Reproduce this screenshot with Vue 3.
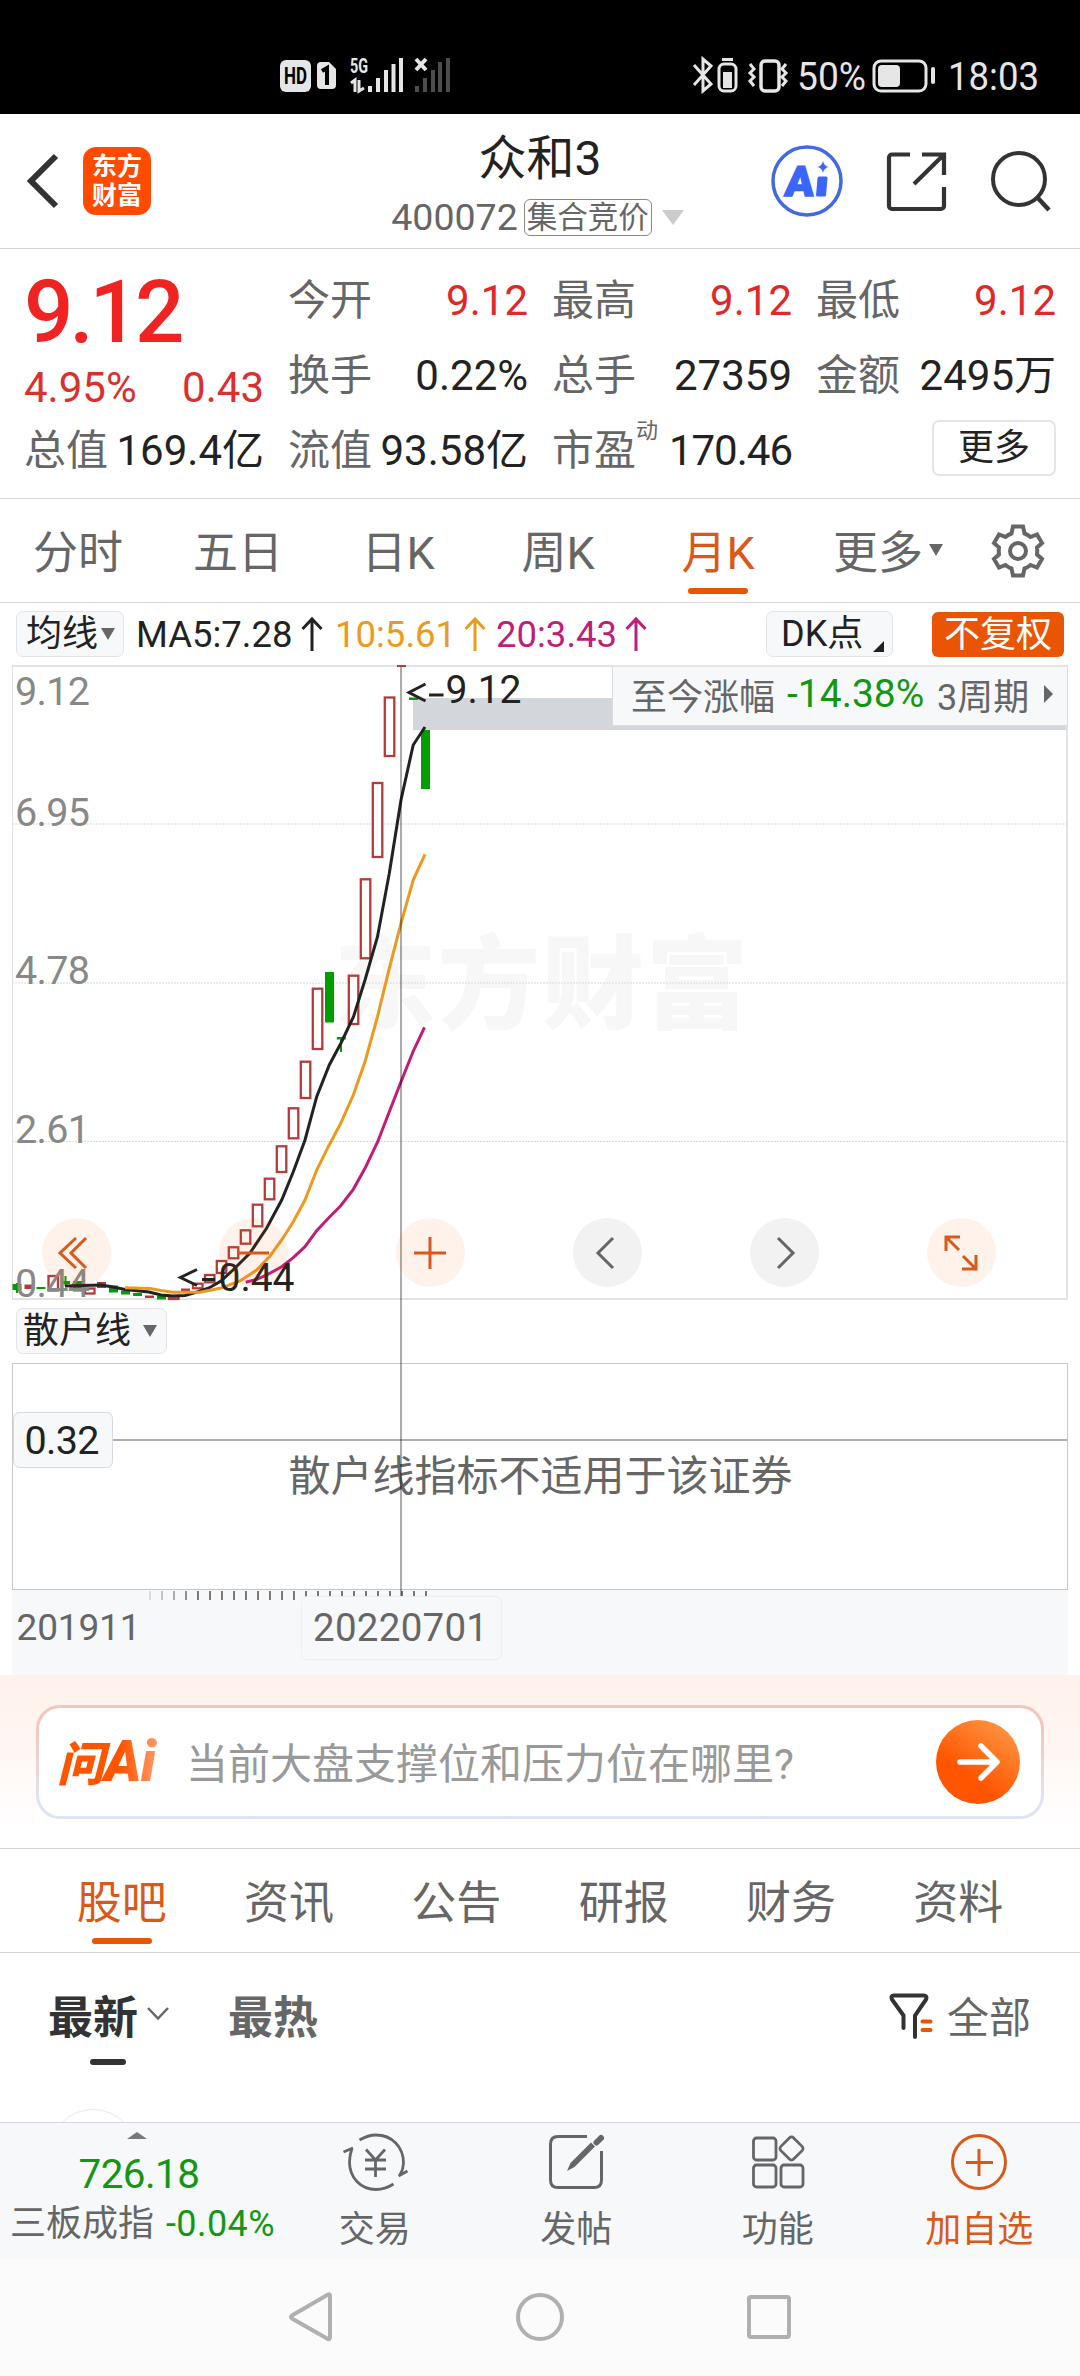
<template>
  <div class="page">
    <div class="status-bar">
      <svg class="status-icons" width="180" height="44" viewBox="276 54 180 44">
        <rect x="280" y="60" width="31" height="32" rx="6" fill="#e6e6e6" />
        <text class="st-bold" x="284" y="84" font-size="23" textLength="23" lengthAdjust="spacingAndGlyphs" fill="#000">HD</text>
        <path d="M321 62h8l7 7v16a4 4 0 0 1-4 4h-11a4 4 0 0 1-4-4V66a4 4 0 0 1 4-4z" fill="#e6e6e6" />
        <path d="M322 71l5-3v17" fill="none" stroke="#000" stroke-width="4" />
        <text class="st-bold" x="350" y="73" font-size="20" textLength="18" lengthAdjust="spacingAndGlyphs" fill="#e6e6e6">5G</text>
        <path d="M351 83l4-3v12M359 80v11l5-3" fill="none" stroke="#e6e6e6" stroke-width="3" />
        <path d="M370 86v6M378 78v14M386 70v22M393.500 64v28M401 58v34" stroke="#e6e6e6" stroke-width="4" />
        <path d="M416 59l10 11M426 59l-10 11" stroke="#e6e6e6" stroke-width="4" />
        <path d="M417 86v6M425 78v14M433 70v22M440 62v30M448 58v34" stroke="#4d4d4d" stroke-width="4" />
      </svg>
      <svg class="status-icons" width="350" height="44" viewBox="690 54 350 44">
        <g fill="none" stroke="#e6e6e6" stroke-width="3">
          <path d="M694 65l17 19-8 7V59l8 7-17 19" />
          <rect x="719" y="64" width="17" height="27" rx="5" />
          <rect x="761" y="61" width="18" height="30" rx="4" stroke-width="3.500" />
          <path d="M750 64l4 5-4 4 4 4-4 4 4 5M786 64l-4 5 4 4-4 4 4 4-4 5" />
          <rect x="874" y="61" width="52" height="30" rx="7" />
        </g>
        <path d="M722 58h11v3h-11zM723 72h9v16h-9z" fill="#e6e6e6" />
        <rect x="878" y="65" width="22" height="22" rx="4" fill="#e6e6e6" />
        <rect x="931" y="67" width="4" height="17" rx="2" fill="#e6e6e6" />
        <text x="797" y="90" font-size="38.500" textLength="69" lengthAdjust="spacingAndGlyphs" fill="#e6e6e6">50%</text>
        <text x="948" y="90" font-size="38.500" textLength="91" lengthAdjust="spacingAndGlyphs" fill="#e6e6e6">18:03</text>
      </svg>
    </div>

    <header class="header">
      <div class="header-left">
        <svg width="36" height="60" viewBox="0 0 36 60">
          <path d="M31 5L6 30L31 55" fill="none" stroke="#333" stroke-width="6" />
        </svg>
        <div class="brand"><span>东方</span><span>财富</span></div>
      </div>
      <div class="header-title">
        <div class="name">众和3</div>
        <div class="code">
          <span>400072</span>
          <span class="tag">集合竞价</span>
          <i class="drop"></i>
        </div>
      </div>
      <div class="header-right">
        <svg width="74" height="74" viewBox="771 145 74 74">
          <circle cx="808" cy="182" r="34" fill="#fff" stroke="#4169e1" stroke-width="3.500" />
          <g transform="translate(785 196.500) skewX(-5)">
            <text class="heavy" x="0" y="0" font-size="42" textLength="29" lengthAdjust="spacingAndGlyphs" fill="#3b66fa" stroke="#3b66fa" stroke-width="1.500">A</text>
            <rect x="32" y="-19" width="10" height="20" rx="1.500" fill="#3b66fa" />
          </g>
          <path d="M824 162q1 5 5.500 6q-4.500 1-5.500 6q-1-5-5.500-6q4.500-1 5.500-6z" fill="#3b66fa" />
        </svg>
        <svg width="62" height="62" viewBox="886 151 62 62">
          <path d="M910 155.500H892a3 3 0 0 0-3 3V207a3 3 0 0 0 3 3h49a3 3 0 0 0 3-3V188M922 155.500H944V176M944 155.500L914 185" fill="none" stroke="#333" stroke-width="4.200" />
        </svg>
        <svg width="62" height="62" viewBox="990 150 62 62">
          <circle cx="1019" cy="179" r="26" fill="none" stroke="#333" stroke-width="4" />
          <path d="M1037 197L1049 210" stroke="#333" stroke-width="4.500" />
        </svg>
      </div>
    </header>

    <section class="quote">
      <div class="quote-col">
        <div class="price">9.12</div>
        <div class="change"><span>4.95%</span><span>0.43</span></div>
        <div class="cell"><span class="label">总值</span><span>169.4亿</span></div>
      </div>
      <div class="quote-col" v-for="(col, i) in quoteCols" :key="i">
        <div class="cell" v-for="c in col" :key="c.label">
          <span class="label">{{ c.label }}<sup v-if="c.sup">{{ c.sup }}</sup></span>
          <span :class="{ red: c.red, tight: c.sup }">{{ c.value }}</span>
        </div>
        <button v-if="i === 2" class="more-btn">更多</button>
      </div>
    </section>

    <nav class="period-tabs">
      <div class="period" v-for="p in periods" :key="p" :class="{ active: p === '月K' }">
        {{ p }}
        <i v-if="p === '更多'" class="tri"></i>
      </div>
      <div class="gear">
        <svg width="56" height="56" viewBox="-28 -28 56 56">
          <path d="M-5 -24.500H5L6.500 -17.500Q9.500 -16.500 12.500 -14L19 -16.500L24 -8L19 -3.500Q19.500 0 19 3.500L24 8L19 16.500L12.500 14Q9.500 16.500 6.500 17.500L5 24.500H-5L-6.500 17.500Q-9.500 16.500 -12.500 14L-19 16.500L-24 8L-19 3.500Q-19.500 0 -19 -3.500L-24 -8L-19 -16.500L-12.500 -14Q-9.500 -16.500 -6.500 -17.500Z" fill="none" stroke="#666" stroke-width="4" />
          <circle r="8" fill="none" stroke="#666" stroke-width="4" />
        </svg>
      </div>
    </nav>

    <div class="ma-row">
      <div class="chip">均线<i class="tri"></i></div>
      <div class="ma" v-for="m in averages" :key="m.text" :class="m.cls">
        <span>{{ m.text }}</span>
        <svg width="22" height="36" viewBox="0 0 22 36">
          <path d="M11 35V3M1.500 13L11 3L20.500 13" fill="none" stroke="currentColor" stroke-width="3" />
        </svg>
      </div>
      <div class="chip dk">DK点<i class="corner"></i></div>
      <div class="adjust">不复权</div>
    </div>

    <section class="chart">
      <svg class="plot" width="1080" height="1010" viewBox="0 665 1080 1010">
        <rect x="12" y="1590" width="1056" height="85" fill="#f7f8fa" />
        <text class="watermark" x="334" y="1021" font-size="102" textLength="414">东方财富</text>
        <path d="M12 824H1067M12 983H1067M12 1141.500H1067" stroke="#d9d9d9" stroke-width="1" stroke-dasharray="2 1" />
        <rect x="413" y="698" width="654" height="32" fill="#d3d6db" />
        <path d="M12 666H1067M12 1299H1068" stroke="#e3e3e3" stroke-width="2" />
        <path d="M12.500 665V1300" stroke="#e0e0e0" />
        <path d="M1067 665V1300" stroke="#e3e3e3" stroke-width="2" />

        <!-- retail line pane -->
        <rect x="12.500" y="1363.500" width="1055" height="226" fill="none" stroke="#c8c8c8" />
        <path d="M112 1440H1067" stroke="#b0b0b0" stroke-width="2" />
        <text x="288.500" y="1491" font-size="42" fill="#666" textLength="504">散户线指标不适用于该证券</text>

        <g v-for="(c, i) in candles" :key="i">
          <rect v-if="c[3] === 'r'" :x="c[0] - 4.500" :y="c[1] + 1" width="9.500" :height="Math.max(c[2] - c[1] - 2, 1)" fill="#fff" stroke="#b23c3c" stroke-width="2.300" />
          <rect v-else :x="c[0] - 4.500" :y="c[1]" width="9" :height="c[2] - c[1]" :fill="c[3] === 'g' ? '#009e00' : '#b23c3c'" />
        </g>
        <path d="M17 1283V1293M65.500 1276V1286M341 1038V1052" stroke="#009e00" stroke-width="2" />

        <text v-for="a in axis" :key="a.v" x="15" :y="a.y" font-size="39.500" textLength="75" fill="#888">{{ a.v }}</text>

        <polyline v-for="l in lines" :key="l.color" :points="l.points" fill="none" :stroke="l.color" stroke-width="3" />

        <g fill="#222" font-size="39">
          <text x="445.500" y="703">9.12</text>
          <text x="218.500" y="1290.500">0.44</text>
          <g fill="none" stroke="#222" stroke-width="3">
            <path d="M425.500 684L409 692.500L425.500 701M429 695H443.500" />
            <path d="M197 1269.500L180.500 1277.500L197 1285.500M202 1279.500H215" />
          </g>
        </g>

        <path v-for="n in 24" :key="n" :d="`M${138 + n * 12} 1591V1600`" stroke="#777" stroke-width="2" :opacity="Math.min(n * 0.2, 1)" />
        <path d="M401 667V1597" stroke="#000" stroke-opacity=".33" stroke-width="2" />
        <rect x="13.500" y="1412.500" width="99" height="55" rx="6" fill="#f7f8fa" stroke="#d5d8de" />
        <text x="24.500" y="1454" font-size="39.500" textLength="75" fill="#222">0.32</text>
        <rect x="301.500" y="1596.500" width="200" height="63" rx="6" fill="#f7f8fa" stroke="#eeeff1" />
        <g fill="#666">
          <text x="16.500" y="1640" font-size="37" textLength="124">201911</text>
          <text x="313" y="1640.500" font-size="38.500" textLength="175">20220701</text>
        </g>
      </svg>

      <div class="banner">
        <span>至今涨幅</span>
        <span class="green">-14.38%</span>
        <span>3周期</span>
        <i class="tri-right"></i>
      </div>

      <div class="controls">
        <button v-for="c in controls" :key="c.d" :class="{ grey: c.grey }">
          <svg width="68" height="68" viewBox="-34 -34 68 68">
            <path :d="c.d" fill="none" stroke="currentColor" stroke-width="3" />
          </svg>
        </button>
      </div>

      <div class="chip sub-chip">散户线<i class="tri"></i></div>
    </section>

    <div class="ask">
      <div class="ask-box">
        <span class="ask-logo">问<b>Ai</b></span>
        <span class="ask-hint">当前大盘支撑位和压力位在哪里?</span>
        <span class="ask-go">
          <svg width="44" height="40" viewBox="0 0 44 40">
            <path d="M4 20H40M25 4L41 20L25 36" fill="none" stroke="#fff" stroke-width="5.500" stroke-linecap="round" stroke-linejoin="round" />
          </svg>
        </span>
      </div>
    </div>

    <nav class="info-tabs">
      <div v-for="t in infoTabs" :key="t" class="info" :class="{ active: t === '股吧' }">{{ t }}</div>
    </nav>

    <div class="feed">
      <div class="sort active">最新
        <svg width="24" height="16" viewBox="0 0 24 16">
          <path d="M2 2L12 12.500L22 2" fill="none" stroke="#666" stroke-width="2.500" />
        </svg>
      </div>
      <div class="sort">最热</div>
      <div class="filter">
        <svg width="46" height="48" viewBox="889 1990 46 48">
          <path d="M904.500 2026V2013.500L893 1997.500Q891.500 1993.500 895 1993.500H924.500Q928.500 1993.500 927 1997.500L916 2013.500V2035" fill="none" stroke="#333" stroke-width="4" stroke-linecap="round" />
          <path d="M923.500 2019.500H931.500M923.500 2028H931.500" stroke="#e95504" stroke-width="4" stroke-linecap="round" />
        </svg>
        <span>全部</span>
      </div>
      <div class="avatar"></div>
    </div>

    <footer class="toolbar">
      <div class="index">
        <i class="tri-up"></i>
        <div class="index-value">726.18</div>
        <div class="index-line"><span>三板成指</span><span class="green">-0.04%</span></div>
      </div>
      <div class="tool">
        <svg width="68" height="66" viewBox="341 2129 68 66">
          <g fill="none" stroke="#666" stroke-width="2.800">
            <path d="M359.500 2140Q368 2135 376 2135C392 2135 403.500 2147 403.500 2163Q403.500 2169 400 2175M398.500 2176L407.500 2171" />
            <path d="M393.500 2184Q385 2189.500 376 2189.500C361 2189.500 349.500 2178 349.500 2162Q349.500 2156 352 2148M343.500 2152L353 2148" />
            <path d="M366 2149.500L375.500 2160L385 2149.500M375.500 2160V2177M365 2160H386M365 2169H386" />
          </g>
        </svg>
        <span>交易</span>
      </div>
      <div class="tool">
        <svg width="68" height="66" viewBox="543 2129 68 66">
          <path d="M588 2136.500H559Q551.500 2136.500 551.500 2144V2180Q551.500 2187.500 559 2187.500H595Q602.500 2187.500 602.500 2180V2151" fill="none" stroke="#666" stroke-width="3" />
          <path d="M568 2171L571.500 2163L592 2142.500L596 2146.500L575.500 2167Z" fill="#666" />
          <path d="M597.500 2142.500L602 2138" stroke="#666" stroke-width="6" stroke-linecap="round" />
        </svg>
        <span>发帖</span>
      </div>
      <div class="tool">
        <svg width="68" height="66" viewBox="744 2129 68 66">
          <g fill="none" stroke="#666" stroke-width="2.800">
            <rect x="753.500" y="2138" width="22.500" height="22" rx="3" />
            <rect x="753.500" y="2165" width="22.500" height="22" rx="3" />
            <rect x="781" y="2165" width="22" height="22" rx="3" />
            <rect x="782.500" y="2139.500" width="18" height="18" rx="3" transform="rotate(45 791.500 2148.500)" />
          </g>
        </svg>
        <span>功能</span>
      </div>
      <div class="tool orange">
        <svg width="68" height="66" viewBox="945 2129 68 66">
          <circle cx="979" cy="2162" r="26.500" fill="none" stroke="#d9591a" stroke-width="3" />
          <path d="M979 2149V2176M966 2162.500H993" stroke="#d9591a" stroke-width="3" />
        </svg>
        <span>加自选</span>
      </div>
    </footer>

    <div class="nav-bar">
      <svg width="54" height="54" viewBox="0 0 54 54"><path d="M44 4.500Q46 3.500 46 6V47Q46 50.500 43 48.500L8 28.500Q6 27 8 25.500Z" fill="none" stroke="#b0b0b0" stroke-width="4" /></svg>
      <svg width="54" height="54" viewBox="0 0 54 54"><circle cx="27" cy="27" r="22" fill="none" stroke="#b0b0b0" stroke-width="4" /></svg>
      <svg width="54" height="54" viewBox="0 0 54 54"><rect x="7" y="7" width="40" height="40" rx="2" fill="none" stroke="#b0b0b0" stroke-width="4" /></svg>
    </div>
  </div>
</template>

<script setup>
const quoteCols = [
  [
    { label: '今开', value: '9.12', red: true },
    { label: '换手', value: '0.22%' },
    { label: '流值', value: '93.58亿' }
  ],
  [
    { label: '最高', value: '9.12', red: true },
    { label: '总手', value: '27359' },
    { label: '市盈', sup: '动', value: '170.46' }
  ],
  [
    { label: '最低', value: '9.12', red: true },
    { label: '金额', value: '2495万' }
  ]
]

const periods = ['分时', '五日', '日K', '周K', '月K', '更多']
const infoTabs = ['股吧', '资讯', '公告', '研报', '财务', '资料']

const averages = [
  { text: 'MA5:7.28', cls: 'ma5' },
  { text: '10:5.61', cls: 'ma10' },
  { text: '20:3.43', cls: 'ma20' }
]

const axis = [
  { v: '9.12', y: 705 },
  { v: '6.95', y: 826 },
  { v: '4.78', y: 984 },
  { v: '2.61', y: 1143 },
  { v: '0.44', y: 1296.5 }
]

// [x, top, bottom, kind]  r = hollow red, f = flat red, g = green
const candles = [
  [17, 1284, 1290, 'g'], [29, 1284.5, 1289, 'f'], [41, 1287, 1289, 'g'],
  [53, 1275, 1291.5, 'r'], [65.5, 1281, 1284, 'g'], [77.5, 1281, 1291.5, 'g'],
  [89.5, 1287.5, 1294.5, 'r'], [101.5, 1282, 1288, 'f'], [113.5, 1285.5, 1292.5, 'g'],
  [125.5, 1290.5, 1294.5, 'g'], [137.5, 1293, 1296, 'g'], [149.5, 1295.5, 1298, 'f'],
  [161.5, 1296, 1299.5, 'g'], [173.5, 1295.5, 1300, 'r'], [185.5, 1288.5, 1291.5, 'f'],
  [197.5, 1282.7, 1289.3, 'r'], [209.5, 1274, 1283.3, 'r'], [221.3, 1260, 1274, 'r'],
  [233.3, 1246.3, 1259.3, 'r'], [245.3, 1229.3, 1244.7, 'r'], [257.3, 1203.7, 1227.3, 'r'],
  [269.3, 1177.7, 1200.3, 'r'], [281.3, 1145.3, 1173, 'r'], [293.3, 1107.3, 1139.3, 'r'],
  [305.3, 1060.7, 1099, 'r'], [317.3, 987.7, 1050, 'r'], [329.5, 972, 1022.5, 'g'],
  [341.3, 1037, 1039.5, 'g'], [353.3, 974.7, 1025, 'r'], [365.3, 878.3, 959.3, 'r'],
  [377.3, 782, 858, 'r'], [389.3, 696.5, 757, 'r'], [401.5, 665, 667, 'f'],
  [413.5, 697.5, 700, 'g'], [425.5, 730, 789, 'g']
]

const lines = [
  {
    color: '#222',
    points: '65,1286 101,1285 113,1287 125,1289.5 149,1292 161,1295 173,1296 185,1295.5 197,1292 209,1288 221,1281 233,1270 250,1253 266.7,1228 281.7,1200 293.3,1171.7 305,1140 316.7,1096.7 329.3,1065 341,1043 353.5,1016.7 365,980 377.5,936.7 389.3,873.3 401,800 413.2,745 425,727'
  },
  {
    color: '#eb9a20',
    points: '125,1287.7 150,1288.5 161,1290.5 173,1292.3 200,1292.3 220,1288.3 240,1281 256.7,1270 270,1256 281.7,1240 293.3,1221.7 305,1200 316.7,1170 328.3,1146.7 340.7,1123.3 353.3,1095 365,1061.7 377.5,1016.7 389.3,968.3 401,923.3 413.2,880 425,854.3'
  },
  {
    color: '#bf1e78',
    points: '245.7,1282.3 256.7,1279.3 266.7,1275 281.7,1266.7 293.3,1257.7 305,1246.7 316.7,1230.7 329.3,1217.3 340.7,1205.7 353.3,1189.3 365,1168.3 377.7,1141.7 389.3,1111.7 401,1081.7 413.3,1051 424.5,1027.3'
  }
]

const controls = [
  { d: 'M0 -15L-16 0L0 15M10 -15L-5 0L10 15' },
  { d: 'M-16 0H16' },
  { d: 'M-16 0H16M0 -16V16' },
  { d: 'M6 -15L-9 0L6 15', grey: true },
  { d: 'M-6 -15L9 0L-6 15', grey: true },
  { d: 'M-15 -2V-16H-1M-15 -16L-2 -3M15 2V16H1M15 16L2 3' }
]
</script>

<style>
body {
  margin: 0;
}
</style>

<style scoped>
.page {
  width: 1080px;
  height: 2376px;
  overflow: hidden;
  display: flex;
  flex-direction: column;
  background: #fff;
  color: #222;
  font-family: Roboto, "Noto Sans CJK SC", sans-serif;
}

.page > * {
  flex: none;
  box-sizing: border-box;
}

svg {
  display: block;
  flex: none;
}

i {
  display: inline-block;
  flex: none;
}

button {
  font-family: inherit;
  padding: 0;
}

.red {
  color: #e02828;
}

.green {
  color: #149614;
}

.tight {
  letter-spacing: -1px;
}

.status-bar {
  height: 114px;
  background: #000;
  display: flex;
  justify-content: space-between;
  align-items: flex-start;
  padding: 54px 40px 0 276px;
}

.st-bold {
  font-weight: 700;
}

.heavy {
  font-weight: 900;
}

.header {
  height: 135px;
  border-bottom: 1px solid #d6d6d6;
  display: flex;
}

.header-left {
  width: 300px;
  display: flex;
  align-items: center;
  padding-left: 25px;
  box-sizing: border-box;
}

.brand {
  width: 68px;
  height: 68px;
  margin-left: 22px;
  border-radius: 13px;
  background: #ff4a00;
  color: #fff;
  font-size: 25px;
  font-weight: 700;
  line-height: 29px;
  display: flex;
  flex-direction: column;
  align-items: center;
  justify-content: center;
}

.header-title {
  width: 480px;
  display: flex;
  flex-direction: column;
  align-items: center;
}

.name {
  margin-top: 15px;
  font-size: 48px;
  line-height: 60px;
}

.code {
  height: 42px;
  margin-top: 7px;
  margin-right: 5px;
  display: flex;
  align-items: center;
  color: #666;
  font-size: 37.5px;
  line-height: 40px;
}

.tag {
  margin-left: 6px;
  border: 1.5px solid #888;
  border-radius: 6px;
  height: 35px;
  line-height: 35px;
  padding: 0 2px;
  font-size: 30.5px;
}

.drop {
  margin-left: 10px;
  border: 11px solid transparent;
  border-top: 15px solid #ccc;
  border-bottom: 0;
}

.header-right {
  width: 300px;
  display: flex;
  align-items: center;
  justify-content: flex-end;
  gap: 42px;
  padding: 0 28px 0 0;
  box-sizing: border-box;
}

.quote {
  height: 250px;
  border-bottom: 1px solid #d6d6d6;
  display: grid;
  grid-template-columns: repeat(4, 240px);
  column-gap: 24px;
  padding: 14px 24px 0;
}

.cell {
  height: 75px;
  display: flex;
  justify-content: space-between;
  align-items: center;
  font-size: 42px;
  line-height: 75px;
  white-space: nowrap;
}

.label {
  position: relative;
  color: #666;
}

.label sup {
  position: absolute;
  left: 84px;
  top: 3px;
  font-size: 22px;
  line-height: 30px;
}

.price {
  height: 100px;
  line-height: 99px;
  font-size: 87px;
  font-weight: 500;
  letter-spacing: -4px;
  color: #f02323;
}

.change {
  height: 50px;
  line-height: 50px;
  display: flex;
  justify-content: space-between;
  font-size: 42px;
  color: #d93030;
}

.more-btn {
  display: block;
  width: 124px;
  height: 56px;
  margin: 7px 0 0 auto;
  border: 2px solid #e4e6ea;
  border-radius: 7px;
  background: #fff;
  color: #222;
  font-size: 36px;
  line-height: 51px;
}

.period-tabs {
  height: 104px;
  border-bottom: 1px solid #d6d6d6;
  display: flex;
}

.period {
  position: relative;
  width: 160px;
  left: -2px;
  text-align: center;
  font-size: 45px;
  line-height: 109px;
  color: #666;
}

.period .tri {
  position: absolute;
  left: 131px;
  top: 45px;
}

.tri {
  border: 7.5px solid transparent;
  border-top: 12px solid #666;
  border-bottom: 0;
}

.active {
  position: relative;
}

.period.active,
.info.active {
  color: #d9591a;
}

.period.active::after,
.info.active::after {
  content: "";
  position: absolute;
  left: 50%;
  bottom: 8px;
  width: 60px;
  height: 6px;
  margin-left: -30px;
  border-radius: 3px;
  background: #e95504;
}

.gear {
  width: 120px;
  display: flex;
  align-items: center;
  justify-content: center;
  margin-left: -2px;
}

.ma-row {
  height: 62px;
  display: flex;
  align-items: flex-start;
  padding: 8px 0 0 16px;
}

.chip {
  box-sizing: border-box;
  width: 108px;
  height: 46px;
  padding-left: 9px;
  display: flex;
  align-items: center;
  border: 1.5px solid #e2e4e9;
  border-radius: 7px;
  background: #f7f8fa;
  font-size: 36px;
  line-height: 46px;
  white-space: nowrap;
}

.chip .tri {
  margin-left: 3px;
}

.ma {
  display: flex;
  align-items: center;
  justify-content: space-between;
  height: 46px;
  font-size: 36.5px;
}

.ma5 {
  width: 187px;
  margin-left: 12px;
}

.ma10 {
  width: 151px;
  margin-left: 12px;
  color: #eb9a20;
}

.ma20 {
  width: 151px;
  margin-left: 10px;
  color: #bf1e78;
}

.dk {
  width: 127px;
  margin-left: 119px;
  padding-left: 14px;
}

.corner {
  margin: 25px 0 0 10px;
  border-left: 11px solid transparent;
  border-bottom: 11px solid #222;
}

.adjust {
  width: 132px;
  height: 45px;
  margin: 1px 0 0 39px;
  border-radius: 6px;
  background: #e95504;
  color: #fff;
  font-size: 36px;
  line-height: 46px;
  text-align: center;
}

.chart {
  position: relative;
  height: 1010px;
}

.watermark {
  font-weight: 900;
  fill: #f7f7f7;
}

.banner {
  position: absolute;
  left: 612px;
  top: 2px;
  width: 456px;
  height: 59px;
  box-sizing: border-box;
  display: flex;
  align-items: center;
  padding: 0 0 4px 18px;
  border: 1.5px solid #d9dbdf;
  border-top: 0;
  background: #f7f8fa;
  color: #666;
  font-size: 36px;
  white-space: nowrap;
}

.banner .green {
  width: 138px;
  margin: 0 12px;
  font-size: 39px;
}

.tri-right {
  margin-left: 15px;
  border: 9px solid transparent;
  border-left: 9px solid #666;
  border-right: 0;
}

.controls {
  position: absolute;
  left: 42px;
  top: 553px;
  display: flex;
  gap: 108px;
}

.controls button {
  width: 69px;
  height: 69px;
  border: 0;
  border-radius: 50%;
  background: rgba(255, 85, 0, .08);
  color: #d9591a;
}

.controls button.grey {
  background: #f2f2f2;
  color: #666;
}

.sub-chip {
  position: absolute;
  left: 16px;
  top: 643px;
  width: 151px;
  padding-left: 6px;
}

.sub-chip .tri {
  margin-left: 12px;
}

.ask {
  height: 174px;
  border-bottom: 1px solid #d6d6d6;
  padding: 30px 36px 0;
  background: linear-gradient(#fff2ec, #fff4f0 30%, #fff 88%);
}

.ask-box {
  height: 114px;
  box-sizing: border-box;
  display: flex;
  align-items: center;
  padding: 0 21px 0 18px;
  border: 3px solid transparent;
  border-radius: 24px;
  background: linear-gradient(#fff, #fff) padding-box, linear-gradient(#f3c6be 20%, #dfe5f0 85%) border-box;
}

.ask-logo {
  width: 129px;
  padding-top: 2px;
  font-size: 47px;
  font-weight: 900;
  font-style: italic;
  line-height: 60px;
  white-space: nowrap;
  color: transparent;
  background: linear-gradient(90deg, #ff5500 50%, #ff9a6a 78%);
  -webkit-background-clip: text;
  background-clip: text;
}

.ask-logo b {
  font-size: 57px;
  font-weight: 900;
  letter-spacing: -1px;
}

.ask-hint {
  flex: 1;
  padding-top: 5px;
  color: #999;
  font-size: 42px;
  line-height: 60px;
}

.ask-go {
  width: 84px;
  height: 84px;
  border-radius: 50%;
  display: flex;
  align-items: center;
  justify-content: center;
  background: linear-gradient(215deg, #ff8f3c 15%, #ff5500 65%);
}

.info-tabs {
  height: 104px;
  border-bottom: 1px solid #d6d6d6;
  display: flex;
  padding: 0 38px;
}

.info {
  flex: 1;
  text-align: center;
  font-size: 45px;
  line-height: 110px;
  color: #666;
}

.feed {
  position: relative;
  height: 169px;
  overflow: hidden;
  display: flex;
  align-items: flex-start;
  padding: 0 49px 0 48px;
}

.sort {
  height: 122px;
  display: flex;
  align-items: center;
  font-size: 45px;
  font-weight: 700;
  color: #666;
}

.sort.active {
  width: 180px;
  color: #333;
}

.sort svg {
  margin-left: 8px;
}

.sort.active::after {
  content: "";
  position: absolute;
  left: 42px;
  top: 106px;
  width: 36px;
  height: 6px;
  border-radius: 3px;
  background: #333;
}

.filter {
  height: 123px;
  display: flex;
  align-items: center;
  margin-left: auto;
  gap: 13px;
  font-size: 42px;
  color: #666;
}

.filter svg {
  margin-top: 3px;
}

.avatar {
  position: absolute;
  left: 49px;
  top: 156px;
  width: 86px;
  height: 86px;
  border: 1px solid #eaeaea;
  border-radius: 50%;
}

.toolbar {
  height: 136px;
  border-top: 1px solid #d2d5d9;
  background: #f7f8fa;
  display: flex;
}

.index {
  width: 274px;
  display: flex;
  flex-direction: column;
  align-items: center;
  color: #666;
}

.tri-up {
  margin-top: 9px;
  border: 10.5px solid transparent;
  border-bottom: 7px solid #77777c;
  border-top: 0;
}

.index-value {
  margin: 7px 0 0 4px;
  font-size: 40.5px;
  letter-spacing: -.6px;
  line-height: 56px;
  color: #149614;
}

.index-line {
  width: 266px;
  margin-left: 12px;
  display: flex;
  gap: 12px;
  font-size: 36px;
  line-height: 44px;
  white-space: nowrap;
}

.index-line .green {
  letter-spacing: .4px;
}

.tool {
  width: 201.5px;
  display: flex;
  flex-direction: column;
  align-items: center;
  padding-top: 6px;
  box-sizing: border-box;
  color: #666;
  font-size: 36px;
  line-height: 70px;
}

.tool.orange {
  color: #d9591a;
}

.nav-bar {
  height: 118px;
  background: #fbfbfb;
  display: flex;
  justify-content: center;
  gap: 175px;
  padding-top: 32px;
}
</style>
